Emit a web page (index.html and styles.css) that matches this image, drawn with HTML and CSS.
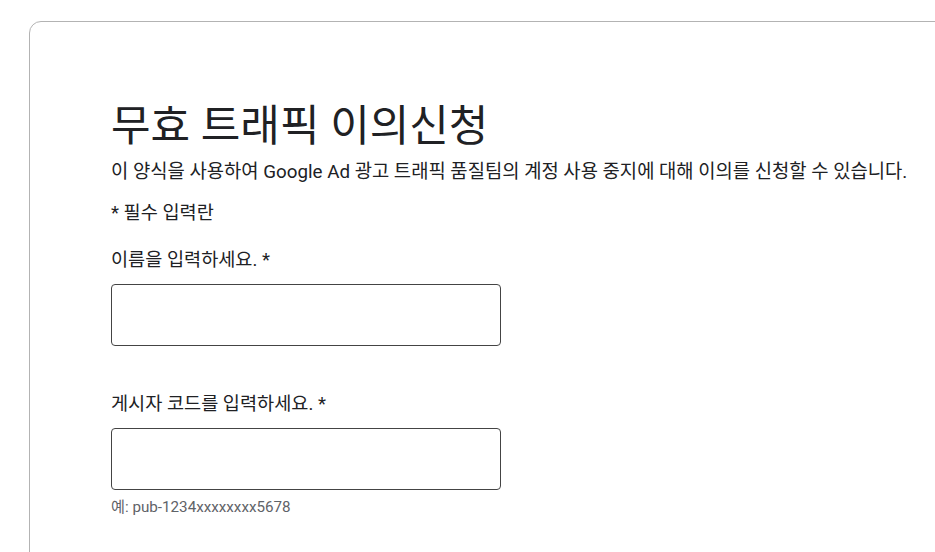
FILE: index.html
```html
<!DOCTYPE html>
<html lang="ko">
<head>
<meta charset="utf-8">
<link rel="stylesheet" href="styles.css">
</head>
<body>
<div class="page">
  <div class="card">
    <h1 class="title">무효 트래픽 이의신청</h1>
    <p class="desc">이 양식을 사용하여 Google Ad 광고 트래픽 품질팀의 계정 사용 중지에 대해 이의를 신청할 수 있습니다.</p>
    <p class="required">* 필수 입력란</p>
    <div class="field">
      <label class="label">이름을 입력하세요. *</label>
      <input class="input" type="text">
    </div>
    <div class="field">
      <label class="label">게시자 코드를 입력하세요. *</label>
      <input class="input" type="text">
      <div class="hint">예: pub-1234xxxxxxxx5678</div>
    </div>
  </div>
</div>
</body>
</html>
```
FILE: styles.css
```css
html, body {
  margin: 0;
  padding: 0;
  background: #fff;
  overflow: hidden;
  width: 935px;
  height: 552px;
}
body {
  font-family: Roboto, "Noto Sans CJK KR", sans-serif;
  color: #202124;
}
.page {
  padding: 21px 0 0 29px;
}
.card {
  width: 1000px;
  height: 700px;
  box-sizing: border-box;
  border: 1px solid #b3b3b3;
  border-radius: 12px;
  padding: 74px 0 0 81px;
}
.title {
  margin: 0;
  font-size: 43px;
  font-weight: 400;
  line-height: 60px;
}
.desc {
  margin: 4px 0 0;
  font-size: 18.8px;
  line-height: 24px;
  white-space: nowrap;
}
.required {
  margin: 17px 0 0;
  font-size: 18.6px;
  line-height: 24px;
}
.field {
  display: flex;
  flex-direction: column;
  align-items: flex-start;
  margin-top: 23px;
}
.field + .field {
  margin-top: 46px;
}
.label {
  font-size: 18.6px;
  line-height: 24px;
}
.input {
  margin-top: 12px;
  width: 390px;
  height: 62px;
  box-sizing: border-box;
  border: 1px solid #444;
  border-radius: 4px;
  outline: none;
  font-family: inherit;
}
.hint {
  margin-top: 7px;
  font-size: 15.2px;
  line-height: 20px;
  color: #5f6368;
}
```
